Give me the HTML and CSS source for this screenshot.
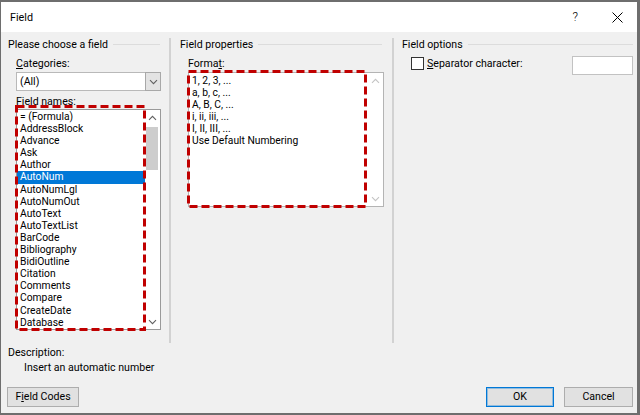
FILE: index.html
```html
<!DOCTYPE html>
<html>
<head>
<meta charset="utf-8">
<title>Field</title>
<link rel="stylesheet" href="styles.css">
</head>
<body>
<div class="window">
  <div class="titlebar">
    <span class="title">Field</span>
    <span class="help">?</span>
    <span class="close"><svg width="11" height="11" viewBox="0 0 11 11"><path d="M0.5 0.5L10.5 10.5M10.5 0.5L0.5 10.5" stroke="#000" stroke-width="1" fill="none"/></svg></span>
  </div>
  <div class="content">
    <div class="panels">
      <section class="col col-choose">
        <div class="group-head head-choose"><span>Please choose a field</span><i class="rule"></i></div>
        <div class="inner inner-choose">
          <div class="label lbl-top"><u>C</u>ategories:</div>
          <div class="combo">
            <span class="combo-text">(All)</span>
            <span class="combo-btn"><svg width="9" height="6" viewBox="0 0 9 6"><path d="M1 1.2L4.5 4.7L8 1.2" stroke="#606060" stroke-width="1.1" fill="none"/></svg></span>
          </div>
          <div class="label lbl-names">Field <u>n</u>ames:</div>
          <div class="listbox names">
            <ul class="items">
              <li>= (Formula)</li>
              <li>AddressBlock</li>
              <li>Advance</li>
              <li>Ask</li>
              <li>Author</li>
              <li class="sel">AutoNum</li>
              <li>AutoNumLgl</li>
              <li>AutoNumOut</li>
              <li>AutoText</li>
              <li>AutoTextList</li>
              <li>BarCode</li>
              <li>Bibliography</li>
              <li>BidiOutline</li>
              <li>Citation</li>
              <li>Comments</li>
              <li>Compare</li>
              <li>CreateDate</li>
              <li>Database</li>
            </ul>
            <div class="vscroll">
              <span class="arrow"><svg width="9" height="6" viewBox="0 0 9 6"><path d="M1 4.8L4.5 1.3L8 4.8" stroke="#606060" stroke-width="1.1" fill="none"/></svg></span>
              <span class="thumb"></span>
              <span class="arrow arrow-down"><svg width="9" height="6" viewBox="0 0 9 6"><path d="M1 1.2L4.5 4.7L8 1.2" stroke="#606060" stroke-width="1.1" fill="none"/></svg></span>
            </div>
          </div>
        </div>
        <svg class="callout callout-names" width="131" height="226" viewBox="0 0 131 226"><rect x="1.5" y="1.5" width="128" height="223" fill="none" stroke="#c00000" stroke-width="3" stroke-dasharray="8 4"/></svg>
      </section>
      <div class="sep"></div>
      <section class="col col-props">
        <div class="group-head head-props"><span>Field properties</span><i class="rule"></i></div>
        <div class="inner inner-props">
          <div class="label lbl-top">Forma<u>t</u>:</div>
          <div class="listbox formats">
            <ul class="items fmt-items">
              <li>1, 2, 3, ...</li>
              <li>a, b, c, ...</li>
              <li>A, B, C, ...</li>
              <li>i, ii, iii, ...</li>
              <li>I, II, III, ...</li>
              <li>Use Default Numbering</li>
            </ul>
            <div class="vscroll">
              <span class="arrow"><svg width="9" height="6" viewBox="0 0 9 6"><path d="M1 4.8L4.5 1.3L8 4.8" stroke="#c4c4c4" stroke-width="1.1" fill="none"/></svg></span>
              <span class="arrow arrow-down"><svg width="9" height="6" viewBox="0 0 9 6"><path d="M1 1.2L4.5 4.7L8 1.2" stroke="#c4c4c4" stroke-width="1.1" fill="none"/></svg></span>
            </div>
          </div>
        </div>
        <svg class="callout callout-fmt" width="180" height="138" viewBox="0 0 180 138"><rect x="1.5" y="1.5" width="177" height="135" fill="none" stroke="#c00000" stroke-width="3" stroke-dasharray="8 4"/></svg>
      </section>
      <div class="sep"></div>
      <section class="col col-opts">
        <div class="group-head head-opts"><span>Field options</span><i class="rule"></i></div>
        <div class="inner inner-opts">
          <div class="opt-row">
            <span class="checkbox"></span>
            <span class="label opt-label"><u>S</u>eparator character:</span>
            <span class="textbox"></span>
          </div>
        </div>
      </section>
    </div>
    <div class="desc-label">Description:</div>
    <div class="desc-text">Insert an automatic number</div>
    <div class="buttons">
      <button class="btn btn-codes">F<u>i</u>eld Codes</button>
      <button class="btn btn-ok">OK</button>
      <button class="btn btn-cancel">Cancel</button>
    </div>
  </div>
</div>
</body>
</html>
```

FILE: styles.css
```css
html, body {
  margin: 0;
  padding: 0;
}
body {
  font-family: Roboto, "Noto Sans", sans-serif;
  font-size: 10.6px;
  color: #000;
  background: #f0f0f0;
}
u {
  text-decoration-thickness: 1px;
  text-underline-offset: 1px;
}
.window {
  width: 640px;
  height: 415px;
  box-sizing: border-box;
  border-style: solid;
  border-color: #6e6e6e;
  border-width: 2px 3px 2px 1px;
  background: #f0f0f0;
  display: flex;
  flex-direction: column;
  overflow: hidden;
}
.titlebar {
  height: 30px;
  flex: none;
  background: #fff;
  display: flex;
  align-items: center;
  padding: 0 14px 0 9px;
}
.title {
  font-size: 10.8px;
  padding-top: 1px;
}
.help {
  margin-left: auto;
  margin-right: 34px;
  font-size: 12px;
  line-height: 12px;
  font-weight: 300;
}
.close {
  display: flex;
  width: 11px;
  height: 11px;
}
.content {
  flex: 1;
  display: flex;
  flex-direction: column;
}
.panels {
  display: flex;
  margin-top: 5px;
  height: 306px;
  flex: none;
}
.col {
  position: relative;
}
.col-choose { width: 168px; }
.col-props { width: 221px; }
.col-opts { flex: 1; }
.sep {
  width: 2px;
  margin-top: 1px;
  background: #d2d2d2;
}
.group-head {
  display: flex;
  align-items: center;
  height: 14px;
  line-height: 15px;
  white-space: nowrap;
}
.head-choose { padding-left: 7px; margin-right: 9px; }
.head-props { padding-left: 9px; margin-right: 10px; }
.head-opts { padding-left: 8px; margin-right: 4px; }
.rule {
  flex: 1;
  height: 1px;
  background: #dcdcdc;
  margin-left: 5px;
}
.inner-choose { padding-left: 15px; }
.inner-props { padding-left: 17px; }
.inner-opts { padding-left: 17px; }
.label {
  line-height: 15px;
  height: 14px;
  white-space: nowrap;
}
.lbl-top { margin-top: 5px; }
.lbl-names { margin-top: 3px; }
.combo {
  margin-top: 2px;
  width: 145px;
  height: 19px;
  display: flex;
}
.combo-text {
  flex: 1;
  box-sizing: border-box;
  height: 19px;
  border: 1px solid #b9b9b9;
  border-right: none;
  background: #fff;
  padding-left: 3px;
  line-height: 18px;
}
.combo-btn {
  width: 16px;
  box-sizing: border-box;
  height: 19px;
  border: 1px solid #a8a8a8;
  background: #e3e3e3;
  display: flex;
  align-items: center;
  justify-content: center;
}
.listbox {
  box-sizing: border-box;
  border: 1px solid #9a9a9a;
  background: #fff;
  display: flex;
}
.names {
  margin-top: 1px;
  width: 145px;
  height: 221px;
}
.formats {
  margin-top: 2px;
  width: 196px;
  height: 135px;
  border-color: #b4b4b4;
}
.items {
  flex: 1;
  list-style: none;
  margin: 0;
  padding: 1px 0 0 0;
  font-size: 10.3px;
}
.fmt-items {
  padding-top: 2px;
}
.items li {
  height: 12.1px;
  line-height: 12.1px;
  padding-left: 3px;
  white-space: nowrap;
}
.items li.sel {
  background: #0078d7;
  color: #fff;
}
.vscroll {
  width: 15px;
  display: flex;
  flex-direction: column;
}
.arrow {
  height: 15px;
  display: flex;
  align-items: center;
  justify-content: center;
}
.arrow-down {
  margin-top: auto;
}
.thumb {
  margin-top: 2px;
  margin-left: 1px;
  width: 12px;
  height: 43px;
  background: #cdcdcd;
}
.callout {
  position: absolute;
  pointer-events: none;
}
.callout-names { left: 14px; top: 68px; }
.callout-fmt { left: 16px; top: 33px; }
.opt-row {
  margin-top: 5px;
  display: flex;
  align-items: flex-start;
  height: 19px;
  margin-right: 4px;
}
.checkbox {
  margin-top: 1px;
  width: 13px;
  height: 13px;
  box-sizing: border-box;
  border: 1px solid #333;
  background: #fff;
}
.opt-label {
  margin-left: 3px;
}
.textbox {
  margin-left: auto;
  width: 61px;
  height: 19px;
  box-sizing: border-box;
  border: 1px solid #c2c2c2;
  background: #fff;
}
.desc-label {
  margin-top: 2px;
  padding-left: 7px;
  line-height: 15px;
  height: 14px;
}
.desc-text {
  margin-top: 1px;
  padding-left: 23px;
  line-height: 15px;
  height: 14px;
}
.buttons {
  margin-top: 13px;
  display: flex;
  padding: 0 4px 0 6px;
  gap: 10px;
}
.btn {
  height: 20px;
  box-sizing: border-box;
  border: 1px solid #adadad;
  background: #e1e1e1;
  font-family: inherit;
  font-size: 10.6px;
  color: #000;
  padding: 0;
  line-height: 18px;
}
.btn-codes { width: 72px; }
.btn-ok {
  width: 68px;
  margin-left: auto;
  border-color: #0078d7;
  box-shadow: inset 0 0 0 1px rgba(0, 120, 215, 0.35);
}
.btn-cancel { width: 69px; }
```
